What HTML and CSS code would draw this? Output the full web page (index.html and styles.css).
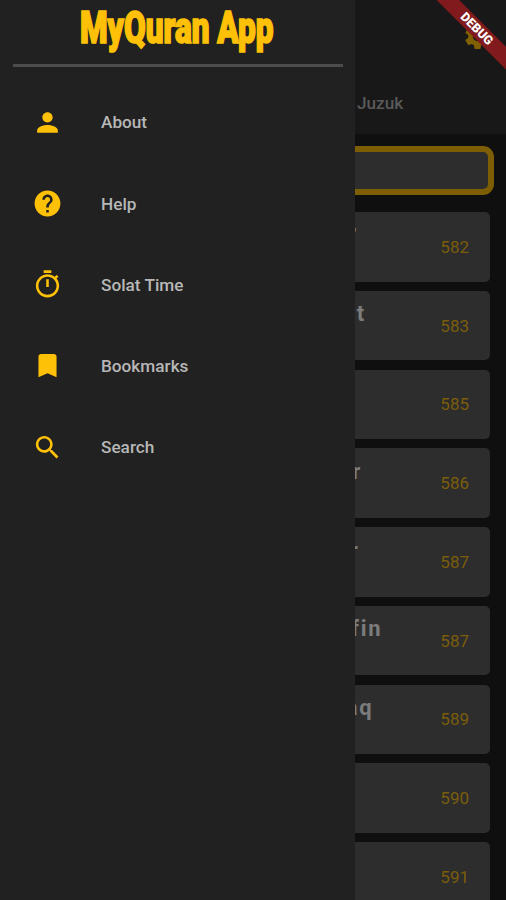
FILE: index.html
```html
<!DOCTYPE html>
<html lang="en">
<head>
<meta charset="utf-8">
<title>MyQuran App</title>
<link rel="stylesheet" href="styles.css">
</head>
<body>
<div class="app">
  <main class="page">
    <header class="bar">
      <svg class="gear" viewBox="0 0 24 24"><path d="M19.14 12.94c.04-.3.06-.61.06-.94 0-.32-.02-.64-.07-.94l2.03-1.58c.18-.14.23-.41.12-.61l-1.92-3.32c-.12-.22-.37-.29-.59-.22l-2.39.96c-.5-.38-1.03-.7-1.62-.94l-.36-2.54c-.04-.24-.24-.41-.48-.41h-3.84c-.24 0-.43.17-.47.41l-.36 2.54c-.59.24-1.13.57-1.62.94l-2.39-.96c-.22-.08-.47 0-.59.22L2.74 8.87c-.12.21-.08.47.12.61l2.03 1.58c-.05.3-.09.63-.09.94s.02.64.07.94l-2.03 1.58c-.18.14-.23.41-.12.61l1.92 3.32c.12.22.37.29.59.22l2.39-.96c.5.38 1.03.7 1.62.94l.36 2.54c.05.24.24.41.48.41h3.84c.24 0 .44-.17.47-.41l.36-2.54c.59-.24 1.13-.56 1.62-.94l2.39.96c.22.08.47 0 .59-.22l1.92-3.32c.12-.22.07-.47-.12-.61l-2.01-1.58zM12 15.6c-1.98 0-3.6-1.62-3.6-3.6s1.62-3.6 3.6-3.6 3.6 1.62 3.6 3.6-1.62 3.6-3.6 3.6z"/></svg>
      <span class="tab">Juzuk</span>
    </header>
    <div class="field"></div>
    <section class="list">
      <div class="card"><span class="name n1">’</span><span class="num">582</span></div>
      <div class="card"><span class="name n2">t</span><span class="num">583</span></div>
      <div class="card"><span class="name"></span><span class="num">585</span></div>
      <div class="card"><span class="name n4">r</span><span class="num">586</span></div>
      <div class="card"><span class="name n5">r</span><span class="num">587</span></div>
      <div class="card"><span class="name n6">fin</span><span class="num">587</span></div>
      <div class="card"><span class="name n7">aq</span><span class="num">589</span></div>
      <div class="card"><span class="name"></span><span class="num">590</span></div>
      <div class="card"><span class="name"></span><span class="num">591</span></div>
    </section>
  </main>
  <aside class="drawer">
    <svg class="title" viewBox="0 0 355 64"><text x="80" y="43.2" textLength="193.5" lengthAdjust="spacingAndGlyphs">MyQuran App</text></svg>
    <div class="rule"></div>
    <nav class="menu">
      <div class="item"><svg viewBox="0 0 24 24"><path d="M12 12c2.21 0 4-1.79 4-4s-1.79-4-4-4-4 1.79-4 4 1.79 4 4 4zm0 2c-2.67 0-8 1.34-8 4v2h16v-2c0-2.66-5.33-4-8-4z"/></svg><span>About</span></div>
      <div class="item"><svg viewBox="0 0 24 24"><path d="M12 2C6.48 2 2 6.48 2 12s4.48 10 10 10 10-4.48 10-10S17.52 2 12 2zm1 17h-2v-2h2v2zm2.07-7.75l-.9.92C13.45 12.9 13 13.5 13 15h-2v-.5c0-1.1.45-2.1 1.17-2.83l1.24-1.26c.37-.36.59-.86.59-1.41 0-1.1-.9-2-2-2s-2 .9-2 2H8c0-2.21 1.79-4 4-4s4 1.79 4 4c0 .88-.36 1.68-.93 2.25z"/></svg><span>Help</span></div>
      <div class="item"><svg viewBox="0 0 24 24"><path d="M15 1H9v2h6V1zm-4 13h2V8h-2v6zm8.03-6.61l1.42-1.42c-.43-.51-.9-.99-1.41-1.41l-1.42 1.42C16.07 4.74 14.12 4 12 4c-4.97 0-9 4.03-9 9s4.02 9 9 9 9-4.03 9-9c0-2.12-.74-4.07-1.97-5.61zM12 20c-3.87 0-7-3.13-7-7s3.13-7 7-7 7 3.13 7 7-3.13 7-7 7z"/></svg><span>Solat Time</span></div>
      <div class="item"><svg viewBox="0 0 24 24"><path d="M17 3H7c-1.1 0-1.99.9-1.99 2L5 21l7-3 7 3V5c0-1.1-.9-2-2-2z"/></svg><span>Bookmarks</span></div>
      <div class="item"><svg viewBox="0 0 24 24"><path d="M15.5 14h-.79l-.28-.27C15.41 12.59 16 11.11 16 9.5 16 5.91 13.09 3 9.5 3S3 5.91 3 9.5 5.91 16 9.5 16c1.61 0 3.09-.59 4.23-1.57l.27.28v.79l5 4.99L20.49 19l-4.99-5zm-6 0C7.01 14 5 11.99 5 9.5S7.01 5 9.5 5 14 7.01 14 9.5 11.99 14 9.5 14z"/></svg><span>Search</span></div>
    </nav>
  </aside>
  <div class="ribbon">DEBUG</div>
</div>
</body>
</html>
```
FILE: styles.css
```css
* { box-sizing: border-box; }
body { margin: 0; background: #0f0f0f; font-family: Roboto, sans-serif; }
.app { position: relative; width: 506px; height: 900px; overflow: hidden; }
.page { display: flex; flex-direction: column; }
.bar {
  height: 134px;
  padding: 21px 13px 20px 357px;
  background: #181818;
  display: flex;
  flex-direction: column;
  justify-content: space-between;
}
.gear { width: 31px; height: 31px; align-self: flex-end; fill: #806003; }
.tab { color: #5a5a5a; font-size: 17.2px; line-height: 22px; font-weight: 500; }
.field {
  height: 49px;
  margin: 12px 12px 17px;
  background: #2d2d2d;
  border: 6px solid #7d5e04;
  border-radius: 11px;
}
.list { display: flex; flex-direction: column; gap: 9.25px; padding: 0 16.5px; }
.card {
  height: 69.5px;
  flex: none;
  display: flex;
  align-items: center;
  justify-content: space-between;
  padding: 0 20.5px 0 0;
  background: #2d2d2d;
  border-radius: 5px;
}
.name {
  align-self: flex-start;
  margin-top: 9.5px;
  text-align: right;
  color: #7c7c7c;
  font-size: 22px;
  line-height: 28px;
  font-weight: 700;
  letter-spacing: 1.8px;
}
.n1 { width: 342px; margin-top: 12px; }
.n2 { width: 349.5px; }
.n4 { width: 345.5px; }
.n5 { width: 343px; }
.n6 { width: 366px; }
.n7 { width: 357px; }
.num { color: #7b5d0a; font-size: 17px; line-height: 20px; }
.drawer {
  position: absolute;
  inset: 0 auto 0 0;
  width: 355px;
  background: #212121;
}
.title { display: block; width: 355px; height: 64px; overflow: visible; }
.title text {
  font-size: 43.5px;
  font-weight: 900;
  fill: #ffc107;
  stroke: #ffc107;
  stroke-width: 1.7px;
}
.rule { height: 3px; margin: 0 12px 0 13px; background: #4d4d4d; }
.menu { padding-top: 14.8px; }
.item {
  height: 81.2px;
  padding-left: 31.5px;
  display: flex;
  align-items: center;
  gap: 38.5px;
  color: #b7b7b7;
  font-size: 17.2px;
  font-weight: 500;
}
.item svg { width: 31px; height: 31px; fill: #ffc107; }
.ribbon {
  position: absolute;
  left: 417px;
  top: 21px;
  width: 120px;
  height: 15.5px;
  background: #801a1d;
  color: #fff;
  font-size: 12.5px;
  line-height: 15.5px;
  font-weight: 900;
  text-align: center;
  transform: rotate(45deg);
}
```
